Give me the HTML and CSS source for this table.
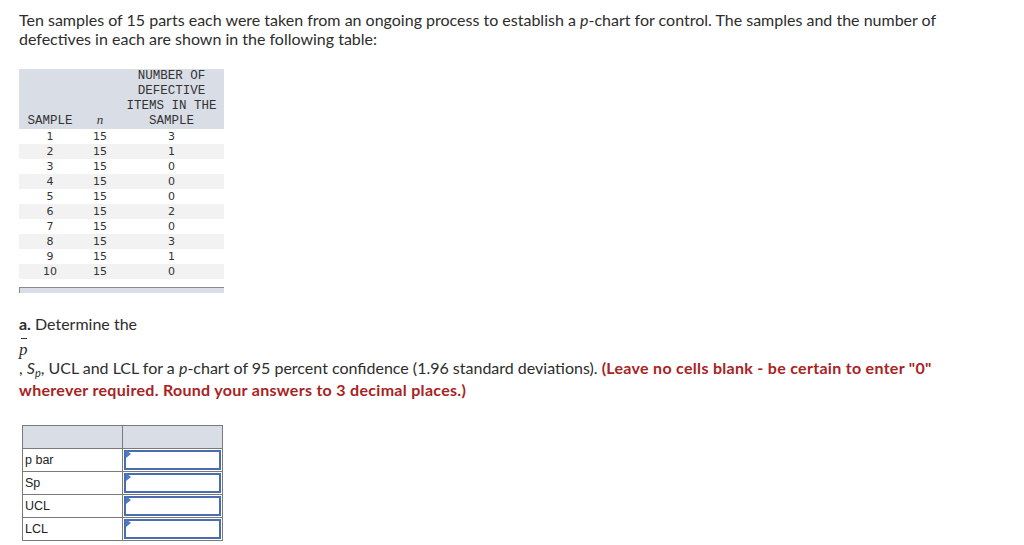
FILE: index.html
```html
<!DOCTYPE html>
<html>
<head>
<meta charset="utf-8">
<link rel="stylesheet" href="styles.css">
</head>
<body>
<div class="page">
  <p class="intro">Ten samples of 15 parts each were taken from an ongoing process to establish a <i class="pi">p</i>-chart for control. The samples and the number of defectives in each are shown in the following table:</p>

  <div class="data-wrap">
    <table class="data">
      <thead>
        <tr>
          <th class="c1">SAMPLE</th>
          <th class="c2"><i class="nvar">n</i></th>
          <th class="c3">NUMBER OF<br>DEFECTIVE<br>ITEMS IN THE<br>SAMPLE</th>
        </tr>
      </thead>
      <tbody>
        <tr><td>1</td><td>15</td><td>3</td></tr>
        <tr><td>2</td><td>15</td><td>1</td></tr>
        <tr><td>3</td><td>15</td><td>0</td></tr>
        <tr><td>4</td><td>15</td><td>0</td></tr>
        <tr><td>5</td><td>15</td><td>0</td></tr>
        <tr><td>6</td><td>15</td><td>2</td></tr>
        <tr><td>7</td><td>15</td><td>0</td></tr>
        <tr><td>8</td><td>15</td><td>3</td></tr>
        <tr><td>9</td><td>15</td><td>1</td></tr>
        <tr><td>10</td><td>15</td><td>0</td></tr>
      </tbody>
    </table>
    <div class="scrollbar"></div>
  </div>

  <div class="question">
    <div class="qline"><b>a.</b> Determine the</div>
    <div class="math"><span class="pbar">p</span></div>
    <div class="qline">, <i class="pi">S<sub>p</sub></i>, UCL and LCL for a <i class="pi">p</i>-chart of 95 percent confidence (1.96 standard deviations). <b class="warn">(Leave no cells blank - be certain to enter "0" wherever required. Round your answers to 3 decimal places.)</b></div>
  </div>

  <table class="answer">
    <colgroup><col class="acol"><col class="acol"></colgroup>
    <tr class="ahead"><td></td><td></td></tr>
    <tr><td class="lbl">p bar</td><td class="inp"><div class="box"></div></td></tr>
    <tr><td class="lbl">Sp</td><td class="inp"><div class="box"></div></td></tr>
    <tr><td class="lbl">UCL</td><td class="inp"><div class="box"></div></td></tr>
    <tr><td class="lbl">LCL</td><td class="inp"><div class="box"></div></td></tr>
  </table>
</div>
</body>
</html>
```

FILE: styles.css
```css
html, body {
  margin: 0;
  padding: 0;
  background: #ffffff;
}

.page {
  padding: 10px 0 0 19px;
  width: 945px;
  font-family: "Lato", "Liberation Sans", sans-serif;
  font-size: 16px;
  color: #2d2d2d;
}

.intro {
  margin: 0;
  line-height: 19px;
}

.pi {
  font-style: italic;
}

.data-wrap {
  margin-top: 21px;
  width: 205px;
}

.data {
  border-collapse: collapse;
  width: 205px;
  table-layout: fixed;
}

.data th {
  background: #d9dde6;
  font-family: "Liberation Mono", monospace;
  font-weight: normal;
  font-size: 12.5px;
  line-height: 15px;
  color: #333;
  vertical-align: bottom;
  text-align: center;
  padding: 0;
}

.data .c1 { width: 62px; }
.data .c2 { width: 38px; }
.data .c3 { width: 105px; }

.nvar {
  font-family: "Liberation Serif", serif;
  font-size: 13px;
}

.data td {
  font-family: "DejaVu Sans", sans-serif;
  font-size: 11px;
  line-height: 15px;
  color: #333;
  text-align: center;
  padding: 0;
}

.data tbody tr:nth-child(even) td {
  background: #f2f2f2;
}

.scrollbar {
  margin-top: 8px;
  height: 5px;
  background: #d9dde6;
  border-top: 1px solid #8a8a8a;
  border-left: 1px solid #8a8a8a;
}

.question {
  margin-top: 20px;
  line-height: 22px;
}

.math {
  height: 22px;
}

.pbar {
  font-family: "Liberation Serif", serif;
  font-style: italic;
  font-size: 17px;
  display: inline-block;
  line-height: 22px;
  padding-top: 4px;
  position: relative;
}

.pbar::before {
  content: "";
  position: absolute;
  left: 2px;
  top: 3px;
  width: 6px;
  height: 1px;
  background: #333;
}

sub {
  font-size: 11px;
  vertical-align: -3px;
  line-height: 0;
}

.warn {
  color: #a82323;
  font-weight: bold;
  letter-spacing: 0.3px;
}

.answer {
  margin-top: 24px;
  margin-left: 3px;
  border-collapse: collapse;
  table-layout: fixed;
  width: 200px;
}

.acol {
  width: 100px;
}

.answer td {
  border: 1px solid #7a7a7a;
  padding: 0;
  vertical-align: middle;
  font-family: "Liberation Sans", sans-serif;
  font-size: 12.5px;
  line-height: 20px;
  color: #222;
}

.ahead td {
  height: 22px;
  background: #d9dde6;
}

.answer .lbl {
  padding: 1px 0 1px 2px;
}

.answer .inp {
  padding: 1px;
}

.box {
  height: 16px;
  border: 2px solid #4a6db0;
  position: relative;
}

.box::before {
  content: "";
  position: absolute;
  left: 0;
  top: -2px;
  border-left: 5px solid #4a7cc8;
  border-top: 4px solid transparent;
  border-bottom: 4px solid transparent;
}
```
